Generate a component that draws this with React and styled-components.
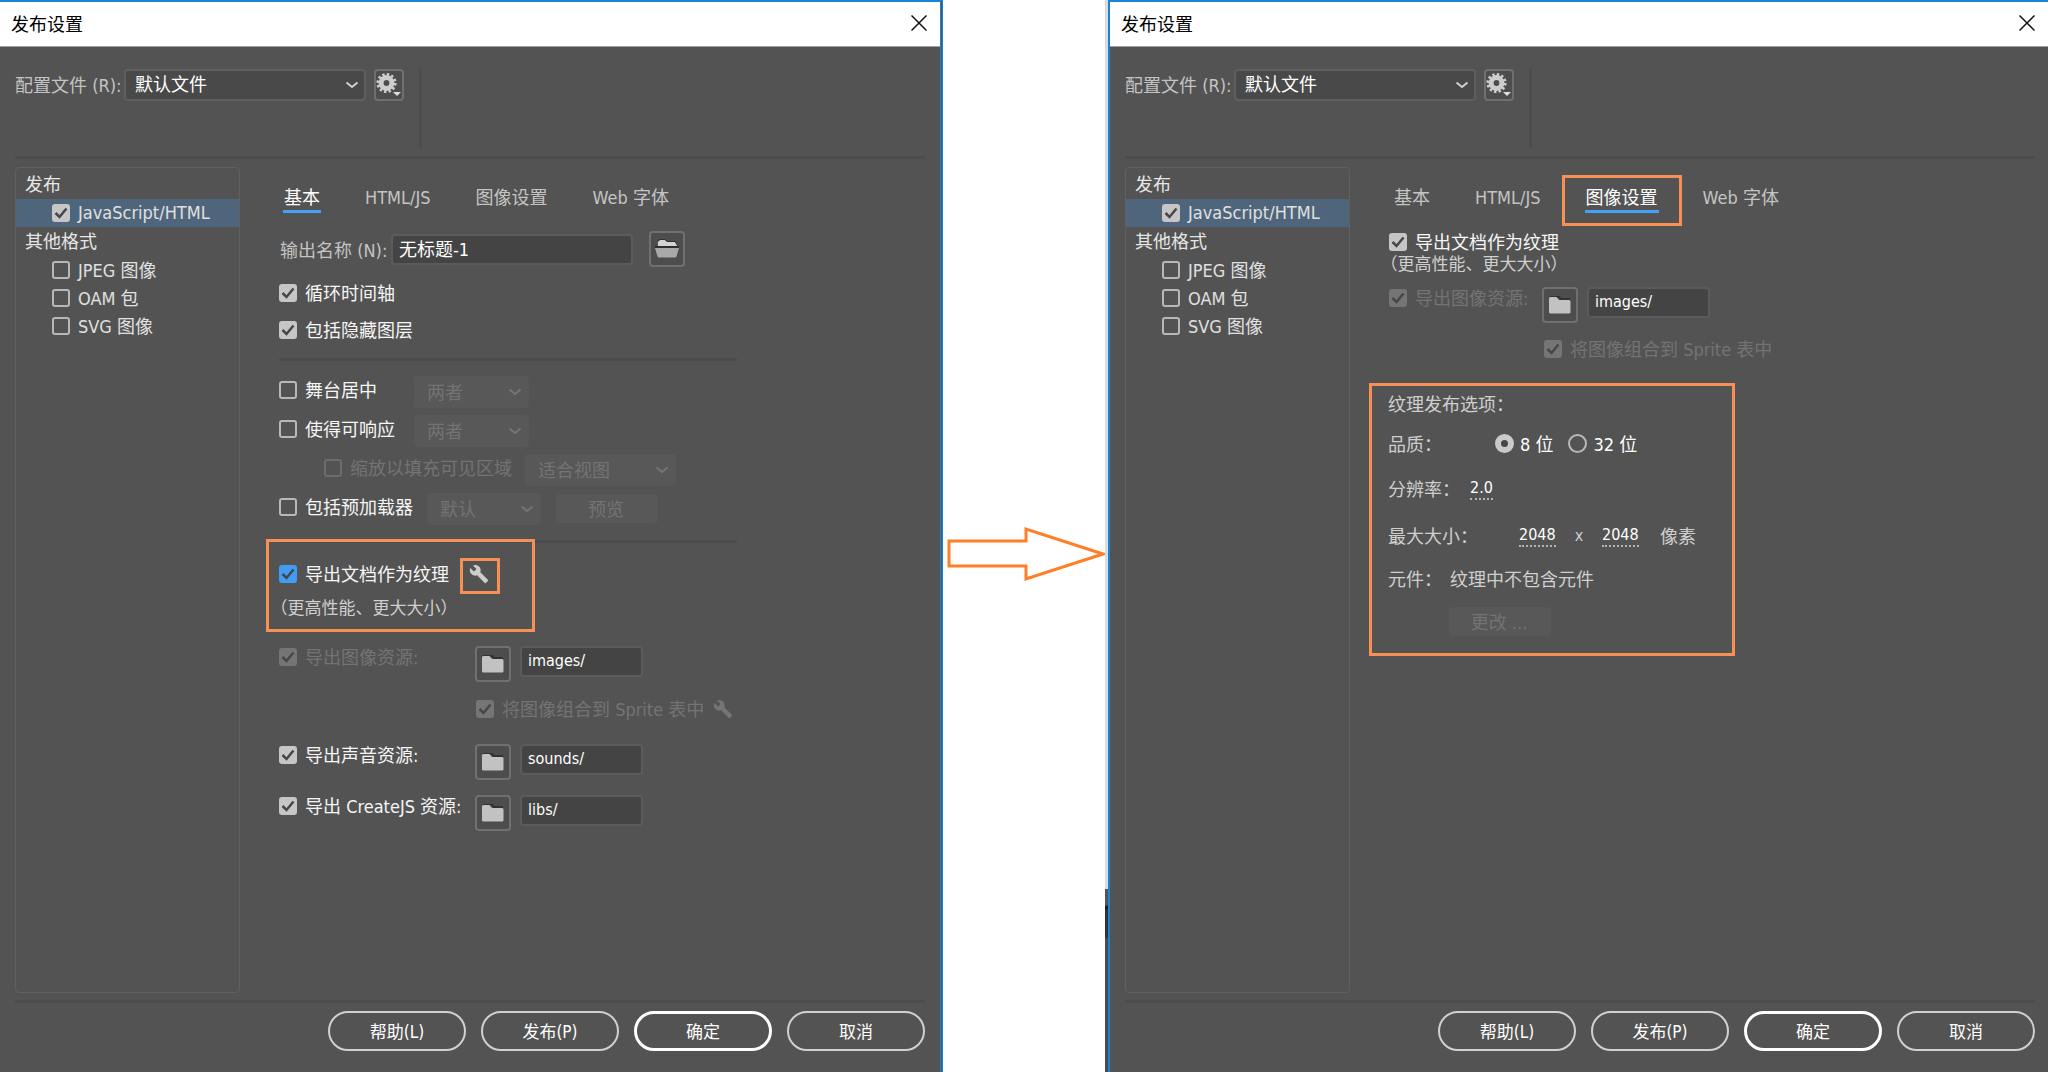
import React, { useId } from 'react';
import styled, { createGlobalStyle, css } from 'styled-components';

const GlobalStyle = createGlobalStyle`
* { box-sizing: border-box; }
body {
	margin: 0;
	background: #fff;
}
body, button, input, select {
	font-family: "DejaVu Sans Condensed", "Noto Sans CJK SC", sans-serif;
	font-size: 18px;
}
`

const Page = styled.div`
display: grid;
grid-template-columns: 1fr 162px 1fr;
min-height: 100vh;
`
const ArrowColumn = styled.div`
display: flex;
justify-content: center;
padding: 526px 0 0 2px;
`
const RightColumn = styled.div`
display: grid;
grid-template-columns: 3px 1fr;
`
const WindowShadow = styled.div`
display: flex;
flex-direction: column;
background: #dcdcdc;
&::after {
	content: "";
	height: 183px;
	margin-top: auto;
	background: linear-gradient(#555 16px, #111 18px, #333 22px, #333 48px, #4a4a4a 50px);
}
`
const Dialog = styled.section`
display: flex;
flex-direction: column;
background: #535353;
border-top: 2px solid #1883d7;
${p => p.$side === 'left'
	? css`border-right: 3px double #1883d7;`
	: css`border-left: 2px solid #1883d7;`}
`
const TitleBar = styled.header`
display: flex;
align-items: center;
justify-content: space-between;
height: 45px;
padding: 0 13px 2px 11px;
background: #fff;
border-bottom: 1px solid #a0a0a0;
`
const Title = styled.h1`
margin: 0;
font-size: 18px;
font-weight: 400;
color: #000;
`
const CloseButton = styled.button`
display: flex;
padding: 0;
border: 0;
background: none;
`
const Body = styled.div`
flex: 1;
display: flex;
flex-direction: column;
padding: 22px ${p => p.$right}px 21px 15px;
`
const Profile = styled.div`
display: flex;
align-items: flex-start;
height: 79px;
`
const ProfileLabel = styled.label`
width: 109px;
line-height: 34px;
white-space: nowrap;
color: #c4c4c4;
`
const Divider = styled.hr`
width: ${p => p.$width || '100%'};
height: 3px;
margin: ${p => p.$margin};
border: 0;
background: #4c4c4c;
`
const VerticalDivider = styled.div`
width: 3px;
height: 100%;
margin-left: 15px;
background: #4c4c4c;
`
const Columns = styled.div`
flex: 1;
display: grid;
grid-template-columns: 225px 1fr;
gap: 39px;
`
const Sidebar = styled.aside`
padding-top: 2px;
border: 1px solid #606060;
border-radius: 4px;
`
const SidebarHead = styled.h2`
margin: 0;
padding-left: 9px;
font-size: 18px;
font-weight: 400;
line-height: 29px;
color: #e6e6e6;
`
const SidebarItem = styled.div`
display: flex;
align-items: center;
height: 28px;
padding-left: 36px;
background: ${p => (p.$active ? '#4f657b' : 'none')};
`
const Tabs = styled.nav`
display: flex;
gap: 43px;
padding: 18px 0 0 4px;
`
const Tab = styled.button`
position: relative;
padding: 0 1px;
border: 0;
border-bottom: 3px solid ${p => (p.$active ? '#46a0f5' : 'transparent')};
background: none;
line-height: 25px;
color: ${p => (p.$active ? '#fff' : '#c4c4c4')};
`
const Marker = styled.span`
position: absolute;
inset: ${p => p.$inset};
border: 3px solid #f79055;
pointer-events: none;
`
const Row = styled.div`
display: flex;
align-items: ${p => p.$align || 'flex-start'};
margin-top: ${p => p.$top || 0}px;
padding-left: ${p => p.$indent || 0}px;
`
const MarkedGroup = styled.div`
position: relative;
margin-top: 15px;
`
const GroupMarker = styled(Marker)`
right: auto;
width: 269px;
`
const CheckLabel = styled.label`
display: flex;
align-items: center;
gap: 8px;
width: ${p => (p.$width ? p.$width + 'px' : 'auto')};
height: ${p => p.$height || 28}px;
white-space: nowrap;
color: ${p => (p.$disabled ? '#737373' : p.$soft ? '#e0e0e0' : '#f6f6f6')};
`
const CheckText = styled.span`
padding-bottom: 2px;
`
const CheckFrame = styled.span`
display: grid;
width: 18px;
height: 18px;
> * { grid-area: 1 / 1; }
svg {
	place-self: center;
	pointer-events: none;
}
input:not(:checked) + svg { display: none; }
`
const CheckInput = styled.input`
appearance: none;
width: 18px;
height: 18px;
margin: 0;
border: 2px solid ${p => (p.disabled ? '#6c6c6c' : '#b8b8b8')};
border-radius: 3px;
&:checked {
	border-color: transparent;
	background: ${p => (p.disabled ? '#757575' : p.$blue ? '#409cf5' : '#c6c6c6')} border-box;
}
`
const RadioInput = styled.input`
appearance: none;
width: 19px;
height: 19px;
margin: 0;
border: 2px solid #b8b8b8;
border-radius: 50%;
&:checked {
	border: 6px solid #cacaca;
	background: #484848;
}
`
const RadioLabel = styled.label`
display: flex;
align-items: center;
gap: 6px;
margin-right: 15px;
color: #fff;
`
const SelectFrame = styled.span`
display: grid;
align-items: center;
width: ${p => p.$width}px;
> * { grid-area: 1 / 1; }
svg {
	justify-self: end;
	margin-right: 7px;
	pointer-events: none;
	color: ${p => (p.$disabled ? '#757575' : '#d0d0d0')};
}
`
const SelectInput = styled.select`
appearance: none;
width: 100%;
height: 32px;
padding: 0 26px 2px 9px;
border: 2px solid #5f5f5f;
border-radius: 4px;
background: #494949;
color: #fff;
opacity: 1;
&:disabled {
	padding: 0 26px 0 11px;
	border-color: #585858;
	background: #585858;
	color: #737373;
}
`
const TextInput = styled.input`
width: ${p => p.$width}px;
height: 31px;
margin-left: ${p => p.$left || 0}px;
padding: 0 6px 2px;
border: 2px solid #5b5b5b;
border-radius: 4px;
background: #444;
color: #fff;
font-size: ${p => p.$size || 16}px;
`
const FieldLabel = styled.label`
width: 112px;
padding-left: 1px;
white-space: nowrap;
color: #c4c4c4;
`
const SquareButton = styled.button`
display: flex;
align-items: center;
justify-content: center;
width: ${p => p.$width || 36}px;
height: ${p => p.$height || 36}px;
padding: 0;
border: 2px solid #707070;
border-radius: 4px;
background: #4d4d4d;
`
const WrenchButton = styled.button`
position: relative;
display: flex;
margin-left: ${p => p.$left}px;
padding: 0;
border: 0;
background: none;
color: ${p => (p.disabled ? '#757575' : '#cdcdcd')};
`
const Caption = styled.p`
margin: ${p => (p.$tight ? '0' : '5px 0 0')};
font-size: 17px;
line-height: ${p => (p.$tight ? 18 : 26)}px;
text-spacing-trim: trim-start;
color: #cfcfcf;
`
const FlatButton = styled.button`
width: 102px;
height: 29px;
margin: ${p => p.$margin};
padding: 0 2px 2px 0;
border: 0;
border-radius: 4px;
background: #585858;
color: #737373;
`
const Options = styled.fieldset`
width: 366px;
margin: 22px 0 0 -20px;
padding: 0 16px 17px;
border: 3px solid #f79055;
`
const OptionRow = styled.div`
display: flex;
align-items: center;
height: ${p => p.$height}px;
padding-bottom: 2px;
color: #cfcfcf;
`
const OptionLabel = styled.label`
width: ${p => p.$width}px;
white-space: nowrap;
`
const NumberInput = styled.input`
width: ${p => p.$width}px;
height: 23px;
padding: 0;
border: 0;
border-bottom: 2px dotted #b4b4b4;
background: none;
color: #fff;
font-size: 16px;
`
const Times = styled.span`
width: 46px;
text-align: center;
font-size: 16px;
`
const Unit = styled.span`
margin-left: 21px;
`
const Footer = styled.footer`
display: flex;
justify-content: flex-end;
gap: 15px;
`
const PillButton = styled.button`
width: 138px;
height: 40px;
padding: 0 0 2px;
border: ${p => (p.$primary ? '3px solid #fff' : '2px solid #d0d0d0')};
border-radius: 20px;
background: none;
color: #fff;
font-size: 17px;
`

function Chevron() {
	return (
		<svg width="14" height="8" viewBox="0 0 14 8" fill="none" stroke="currentColor" strokeWidth="2">
			<path d="M1.5 1.5L7 6l5.5-4.5" />
		</svg>
	)
}

function Gear() {
	return (
		<svg width="26" height="28" viewBox="0 0 26 28" fill="none">
			<circle cx="10.5" cy="12" r="5.4" stroke="#cdcdcd" strokeWidth="5" />
			<circle cx="10.5" cy="12" r="8.6" stroke="#cdcdcd" strokeWidth="3" strokeDasharray="2.4 2.1" />
			<path d="M17 21h8l-4 4z" fill="#dedede" />
		</svg>
	)
}

function Folder() {
	return (
		<svg width="24" height="20" viewBox="0 0 24 20">
			<path d="M2 2h9l2 2h9" fill="none" stroke="#333" strokeWidth="2" />
			<path d="M1 3.5Q1 2 2.500 2H8.500L11 5H21Q22.500 5 22.500 6.500V17Q22.500 18.500 21 18.500H2.500Q1 18.500 1 17z" fill="#c2c2c2" />
		</svg>
	)
}

function OpenFolder() {
	return (
		<svg width="26" height="20" viewBox="0 0 26 20">
			<path d="M4 7V3l2-2h5l2 2h8l2 4z" fill="#d4d4d4" />
			<path d="M4 1.500l2-1h5l2 2h8l1.500 2" fill="none" stroke="#303030" />
			<path d="M1 8h24" stroke="#303030" strokeWidth="2" />
			<path d="M1 9h24l-2.500 8.500q-.3 1-1.500 1H5q-1.200 0-1.500-1z" fill="#a8a8a8" />
		</svg>
	)
}

function Wrench() {
	return (
		<svg width="20" height="20" viewBox="0 0 24 24" fill="currentColor">
			<path d="M22.700 19l-9.100-9.100c.9-2.300.4-5-1.500-6.900-2-2-5-2.400-7.400-1.300L9 6 6 9 1.600 4.700C.4 7.100.9 10.100 2.900 12.100c1.900 1.900 4.600 2.400 6.900 1.500l9.100 9.100c.4.4 1 .4 1.400 0l2.300-2.300c.5-.4.5-1.100.1-1.400z" />
		</svg>
	)
}

function Check({ label, checked, disabled, blue, ...rest }) {
	return (
		<CheckLabel $disabled={disabled} {...rest}>
			<CheckFrame>
				<CheckInput type="checkbox" defaultChecked={checked} disabled={disabled} $blue={blue} />
				<svg width="14" height="12" viewBox="0 0 14 12" fill="none" stroke="#474747" strokeWidth="2.500">
					<path d="M1.500 6l4 4 7-8.500" />
				</svg>
			</CheckFrame>
			<CheckText>{label}</CheckText>
		</CheckLabel>
	)
}

function Select({ id, label, value, width, disabled }) {
	return (
		<SelectFrame $width={width} $disabled={disabled}>
			<SelectInput id={id} aria-label={label} disabled={disabled}>
				<option>{value}</option>
			</SelectInput>
			<Chevron />
		</SelectFrame>
	)
}

function PathRow({ label, path, top, disabled, labelWidth = 196 }) {
	return (
		<Row $top={top}>
			<Check label={label} checked disabled={disabled} $width={labelWidth} $height={22} />
			<SquareButton aria-label="浏览"><Folder /></SquareButton>
			<TextInput aria-label={label} defaultValue={path} $width={123} $left={9} />
		</Row>
	)
}

function BasicTab() {
	const name = useId();
	return (
		<>
			<Row $top={18} $align="center">
				<FieldLabel htmlFor={name}>输出名称 (N):</FieldLabel>
				<TextInput id={name} defaultValue="无标题-1" $width={242} $size={18} />
				<Row $indent={16}>
					<SquareButton aria-label="浏览"><OpenFolder /></SquareButton>
				</Row>
			</Row>
			<Row $top={12}><Check label="循环时间轴" checked /></Row>
			<Row $top={9}><Check label="包括隐藏图层" checked /></Row>
			<Divider $width="458px" $margin="14px 0 15px" />
			<Row>
				<Check label="舞台居中" $width={135} />
				<Select label="舞台居中" value="两者" width={115} disabled />
			</Row>
			<Row $top={7}>
				<Check label="使得可响应" $width={135} />
				<Select label="使得可响应" value="两者" width={115} disabled />
			</Row>
			<Row $top={7} $indent={45}>
				<Check label="缩放以填充可见区域" disabled $width={201} />
				<Select label="缩放" value="适合视图" width={151} disabled />
			</Row>
			<Row $top={7}>
				<Check label="包括预加载器" $width={148} />
				<Select label="预加载器" value="默认" width={114} disabled />
				<FlatButton disabled $margin="1px 0 0 15px">预览</FlatButton>
			</Row>
			<Divider $width="458px" $margin="15px 0 0" />
			<MarkedGroup>
				<Row $align="center">
					<Check label="导出文档作为纹理" checked blue $height={32} />
					<WrenchButton $left={20} aria-label="纹理设置">
						<Wrench />
						<Marker $inset="-6px -11px -10px -9px" />
					</WrenchButton>
				</Row>
				<Caption>（更高性能、更大大小）</Caption>
				<GroupMarker $inset="-19px auto -11px -13px" />
			</MarkedGroup>
			<PathRow label="导出图像资源:" path="images/" top={25} disabled />
			<Row $top={15} $indent={197} $align="center">
				<Check label="将图像组合到 Sprite 表中" checked disabled $height={24} />
				<WrenchButton $left={9} disabled aria-label="Sprite 设置"><Wrench /></WrenchButton>
			</Row>
			<PathRow label="导出声音资源:" path="sounds/" top={23} />
			<PathRow label="导出 CreateJS 资源:" path="libs/" top={15} />
		</>
	)
}

function ImageTab() {
	const id = useId();
	return (
		<>
			<Row $top={16}><Check label="导出文档作为纹理" checked $height={26} /></Row>
			<Caption $tight>（更高性能、更大大小）</Caption>
			<PathRow label="导出图像资源:" path="images/" top={14} disabled labelWidth={153} />
			<Row $top={14} $indent={155}>
				<Check label="将图像组合到 Sprite 表中" checked disabled $height={24} />
			</Row>
			<Options>
				<OptionRow $height={36}>纹理发布选项：</OptionRow>
				<OptionRow $height={44} role="radiogroup">
					<OptionLabel as="span" $width={107}>品质：</OptionLabel>
					<RadioLabel><RadioInput type="radio" name="quality" defaultChecked />8 位</RadioLabel>
					<RadioLabel><RadioInput type="radio" name="quality" />32 位</RadioLabel>
				</OptionRow>
				<OptionRow $height={46}>
					<OptionLabel htmlFor={id + 'res'} $width={82}>分辨率：</OptionLabel>
					<NumberInput id={id + 'res'} defaultValue="2.0" $width={23} />
				</OptionRow>
				<OptionRow $height={48}>
					<OptionLabel htmlFor={id + 'w'} $width={131}>最大大小：</OptionLabel>
					<NumberInput id={id + 'w'} defaultValue="2048" $width={37} />
					<Times>x</Times>
					<NumberInput aria-label="最大高度" defaultValue="2048" $width={37} />
					<Unit>像素</Unit>
				</OptionRow>
				<OptionRow $height={38}>
					<OptionLabel as="span" $width={62}>元件：</OptionLabel>
					纹理中不包含元件
				</OptionRow>
				<FlatButton disabled $margin="9px 0 0 61px">更改 ...</FlatButton>
			</Options>
		</>
	)
}

const TABS = ['基本', 'HTML/JS', '图像设置', 'Web 字体'];

function PublishDialog({ side, active, right, marked, children }) {
	const profile = useId();
	return (
		<Dialog $side={side}>
			<TitleBar>
				<Title>发布设置</Title>
				<CloseButton aria-label="关闭">
					<svg width="16" height="16" viewBox="0 0 16 16" stroke="#111" strokeWidth="1.500">
						<path d="M.5.500l15 15M15.500.500l-15 15" />
					</svg>
				</CloseButton>
			</TitleBar>
			<Body $right={right}>
				<Profile>
					<ProfileLabel htmlFor={profile}>配置文件 (R):</ProfileLabel>
					<Select id={profile} value="默认文件" width={242} />
					<Row $indent={8}>
						<SquareButton $width={30} $height={32} aria-label="配置文件选项"><Gear /></SquareButton>
					</Row>
					<VerticalDivider />
				</Profile>
				<Divider $margin="8px 0" />
				<Columns>
					<Sidebar>
						<SidebarHead>发布</SidebarHead>
						<SidebarItem $active><Check label="JavaScript/HTML" checked $soft /></SidebarItem>
						<SidebarHead>其他格式</SidebarHead>
						<SidebarItem><Check label="JPEG 图像" $soft /></SidebarItem>
						<SidebarItem><Check label="OAM 包" $soft /></SidebarItem>
						<SidebarItem><Check label="SVG 图像" $soft /></SidebarItem>
					</Sidebar>
					<main>
						<Tabs>
							{TABS.map(tab => (
								<Tab key={tab} $active={tab === active}>
									{tab}
									{marked && tab === active && <Marker $inset="-10px -23px -16px" />}
								</Tab>
							))}
						</Tabs>
						{children}
					</main>
				</Columns>
				<Divider $margin="7px 0 8px" />
				<Footer>
					<PillButton>帮助(L)</PillButton>
					<PillButton>发布(P)</PillButton>
					<PillButton $primary>确定</PillButton>
					<PillButton>取消</PillButton>
				</Footer>
			</Body>
		</Dialog>
	)
}

export default function App() {
	return (
		<>
			<GlobalStyle />
			<Page>
				<PublishDialog side="left" active="基本" right={15}>
					<BasicTab />
				</PublishDialog>
				<ArrowColumn>
					<svg width="160" height="56" viewBox="0 0 160 56" fill="none" stroke="#ff7f27" strokeWidth="3">
						<path d="M4 15H81V3L158 28 81 53V40H4z" />
					</svg>
				</ArrowColumn>
				<RightColumn>
					<WindowShadow />
					<PublishDialog side="right" active="图像设置" right={13} marked>
						<ImageTab />
					</PublishDialog>
				</RightColumn>
			</Page>
		</>
	)
}
